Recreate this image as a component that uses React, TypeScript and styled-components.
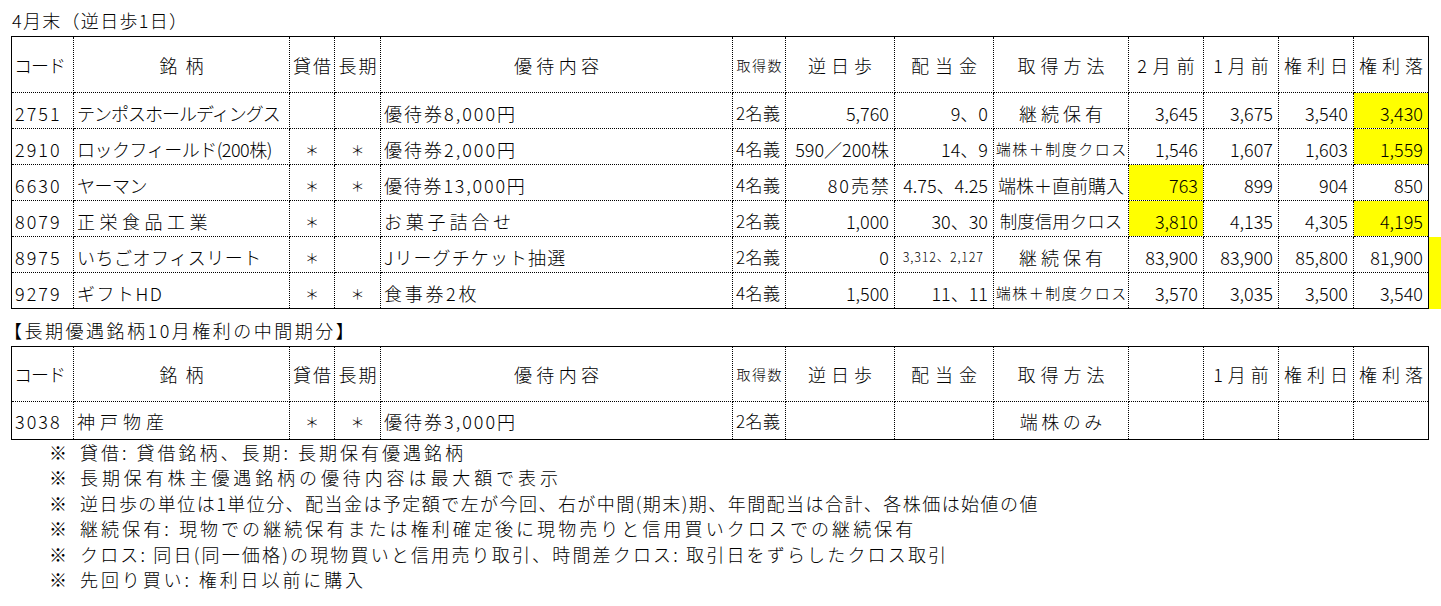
import React from 'react';
import styled, { createGlobalStyle } from 'styled-components';

const Global = createGlobalStyle`
  html, body { margin: 0; padding: 0; background: #fff; overflow: hidden; }
  body { font-family: "Noto Sans CJK JP", "Noto Sans", sans-serif; font-weight: 300; color: #000; }
`;

const Page = styled.div`
  width: 1441px;
  height: 606px;
  padding-left: 11px;
  box-sizing: border-box;
`;

const Title = styled.div<{ $h: number; $top: number; $indent: number; $ls: number }>`
  height: ${(p) => p.$h}px;
  box-sizing: border-box;
  padding-top: ${(p) => p.$top}px;
  margin-left: ${(p) => p.$indent}px;
  font-size: 18px;
  line-height: 26px;
  letter-spacing: ${(p) => p.$ls}px;
  white-space: nowrap;
`;

const SheetRow = styled.div`
  display: flex;
  align-items: flex-end;
`;

const Strip = styled.div`
  width: 12px;
  height: 72px;
  background: #ffff00;
  flex: none;
`;

const Sheet = styled.table`
  border-collapse: collapse;
  table-layout: fixed;
  width: 1418px;
  border: 1px solid #000;
  flex: none;
`;

const Col = styled.col<{ $w: number }>`
  width: ${(p) => p.$w}px;
`;

const Tr = styled.tr<{ $h: number }>`
  height: ${(p) => p.$h}px;
`;

type Align = 'left' | 'center' | 'right';

const Head = styled.th<{ $ls?: number; $size?: number; $align?: Align }>`
  border: 1px dotted #000;
  font-weight: 300;
  font-size: ${(p) => p.$size ?? 18}px;
  letter-spacing: ${(p) => p.$ls ?? 0}px;
  text-align: ${(p) => p.$align ?? 'center'};
  padding: 0 0 0 ${(p) => (p.$align === 'left' ? 2 : p.$ls ?? 0)}px;
  white-space: nowrap;
  overflow: hidden;
  vertical-align: middle;
  line-height: 26px;
`;

const Cell = styled.td<{
  $ls?: number;
  $size?: number;
  $align?: Align;
  $hl?: boolean;
  $mid?: boolean;
  $pr?: number;
}>`
  border: 1px dotted #000;
  font-size: ${(p) => p.$size ?? 18}px;
  letter-spacing: ${(p) => p.$ls ?? 0}px;
  text-align: ${(p) => p.$align ?? 'left'};
  padding: ${(p) => {
    const ls = p.$ls ?? 0;
    const b = p.$mid ? 0 : 2;
    if (p.$align === 'right') return `0 ${(p.$pr ?? 5) - ls}px ${b}px 0`;
    if (p.$align === 'center') return `0 0 ${b}px ${ls}px`;
    return `0 0 ${b}px 3px`;
  }};
  background: ${(p) => (p.$hl ? '#ffff00' : 'transparent')};
  white-space: nowrap;
  overflow: hidden;
  vertical-align: ${(p) => (p.$mid ? 'middle' : 'bottom')};
  line-height: 26px;
`;

const Notes = styled.div`
  display: flex;
  flex-direction: column;
  padding-left: 38px;
`;

const Note = styled.div<{ $ls: number }>`
  display: flex;
  font-size: 18px;
  line-height: 25.4px;
  white-space: nowrap;
  letter-spacing: ${(p) => p.$ls}px;
`;

const Mark = styled.span`
  width: 31px;
  letter-spacing: 0;
  flex: none;
`;

const widths = [62, 216, 45, 46, 352, 53, 109, 99, 135, 75, 75, 75, 75];

type Method = { text: string; size: number; ls: number };
const KEIZOKU: Method = { text: '継続保有', size: 18, ls: 4 };
const HAKABU_SEIDO: Method = { text: '端株＋制度クロス', size: 15, ls: 1.5 };
const HAKABU_CHOKU: Method = { text: '端株＋直前購入', size: 18, ls: 0 };
const SEIDO_SHINYO: Method = { text: '制度信用クロス', size: 17.5, ls: 0 };

type Row = {
  code: string;
  name: string;
  nameLs: number;
  kashaku: boolean;
  choki: boolean;
  yutai: string;
  yutaiLs: number;
  num: string;
  gyaku: string;
  gyakuLs: number;
  haito: string;
  haitoSmall?: boolean;
  method: Method;
  prices: string[];
  hl: boolean[];
};

const rows: Row[] = [
  {
    code: '2751', name: 'テンポスホールディングス', nameLs: -1, kashaku: false, choki: false,
    yutai: '優待券8,000円', yutaiLs: 2, num: '2名義', gyaku: '5,760', gyakuLs: 0,
    haito: '9、0', method: KEIZOKU,
    prices: ['3,645', '3,675', '3,540', '3,430'], hl: [false, false, false, true],
  },
  {
    code: '2910', name: 'ロックフィールド(200株)', nameLs: -0.5, kashaku: true, choki: true,
    yutai: '優待券2,000円', yutaiLs: 2, num: '4名義', gyaku: '590／200株', gyakuLs: 0,
    haito: '14、9', method: HAKABU_SEIDO,
    prices: ['1,546', '1,607', '1,603', '1,559'], hl: [false, false, false, true],
  },
  {
    code: '6630', name: 'ヤーマン', nameLs: -0.5, kashaku: true, choki: true,
    yutai: '優待券13,000円', yutaiLs: 1.8, num: '4名義', gyaku: '80売禁', gyakuLs: 2,
    haito: '4.75、4.25', method: HAKABU_CHOKU,
    prices: ['763', '899', '904', '850'], hl: [true, false, false, false],
  },
  {
    code: '8079', name: '正栄食品工業', nameLs: 4.5, kashaku: true, choki: false,
    yutai: 'お菓子詰合せ', yutaiLs: 3.8, num: '2名義', gyaku: '1,000', gyakuLs: 0,
    haito: '30、30', method: SEIDO_SHINYO,
    prices: ['3,810', '4,135', '4,305', '4,195'], hl: [true, false, false, true],
  },
  {
    code: '8975', name: 'いちごオフィスリート', nameLs: 0.5, kashaku: true, choki: false,
    yutai: 'Jリーグチケット抽選', yutaiLs: 1.1, num: '2名義', gyaku: '0', gyakuLs: 0,
    haito: '3,312、2,127', haitoSmall: true, method: KEIZOKU,
    prices: ['83,900', '83,900', '85,800', '81,900'], hl: [false, false, false, false],
  },
  {
    code: '9279', name: 'ギフトHD', nameLs: 1.5, kashaku: true, choki: true,
    yutai: '食事券2枚', yutaiLs: 2.7, num: '4名義', gyaku: '1,500', gyakuLs: 0,
    haito: '11、11', method: HAKABU_SEIDO,
    prices: ['3,570', '3,035', '3,500', '3,540'], hl: [false, false, false, false],
  },
];

const Star = () => <>＊</>;

function HeaderRow({ h, showTwoMonths }: { h: number; showTwoMonths: boolean }) {
  return (
    <Tr $h={h}>
      <Head $align="left" $ls={-1}>コード</Head>
      <Head $ls={8}>銘柄</Head>
      <Head $ls={2}>貸借</Head>
      <Head $ls={2}>長期</Head>
      <Head $ls={4.3}>優待内容</Head>
      <Head $size={14} $ls={1.5}>取得数</Head>
      <Head $ls={5}>逆日歩</Head>
      <Head $ls={6}>配当金</Head>
      <Head $ls={5}>取得方法</Head>
      <Head $ls={6}>{showTwoMonths ? '2月前' : ''}</Head>
      <Head $ls={5}>1月前</Head>
      <Head $ls={5}>権利日</Head>
      <Head $ls={5}>権利落</Head>
    </Tr>
  );
}

function Cols() {
  return (
    <colgroup>
      {widths.map((w, i) => (
        <Col key={i} $w={w} />
      ))}
    </colgroup>
  );
}

const notes: { text: string; ls: number }[] = [
  { text: '貸借: 貸借銘柄、長期: 長期保有優遇銘柄', ls: 3 },
  { text: '長期保有株主優遇銘柄の優待内容は最大額で表示', ls: 3.9 },
  { text: '逆日歩の単位は1単位分、配当金は予定額で左が今回、右が中間(期末)期、年間配当は合計、各株価は始値の値', ls: 1.45 },
  { text: '継続保有: 現物での継続保有または権利確定後に現物売りと信用買いクロスでの継続保有', ls: 3.07 },
  { text: 'クロス: 同日(同一価格)の現物買いと信用売り取引、時間差クロス: 取引日をずらしたクロス取引', ls: 2.17 },
  { text: '先回り買い: 権利日以前に購入', ls: 2.9 },
];

export default function App() {
  return (
    <>
      <Global />
      <Page>
        <Title $h={36} $top={7} $indent={1} $ls={1.3}>
          4月末（逆日歩1日）
        </Title>
        <SheetRow>
          <Sheet>
            <Cols />
            <tbody>
              <HeaderRow h={56} showTwoMonths />
              {rows.map((r) => (
                <Tr $h={36} key={r.code}>
                  <Cell $ls={2}>{r.code}</Cell>
                  <Cell $ls={r.nameLs}>{r.name}</Cell>
                  <Cell $align="center" $size={14}>{r.kashaku ? <Star /> : ''}</Cell>
                  <Cell $align="center" $size={14}>{r.choki ? <Star /> : ''}</Cell>
                  <Cell $ls={r.yutaiLs}>{r.yutai}</Cell>
                  <Cell $size={17} $ls={0.5}>{r.num}</Cell>
                  <Cell $align="right" $ls={r.gyakuLs}>{r.gyaku}</Cell>
                  {r.haitoSmall ? (
                    <Cell $align="right" $size={12.5} $ls={0.8} $pr={10}>{r.haito}</Cell>
                  ) : (
                    <Cell $align="right">{r.haito}</Cell>
                  )}
                  <Cell $align="center" $size={r.method.size} $ls={r.method.ls}>
                    {r.method.text}
                  </Cell>
                  {r.prices.map((p, i) => (
                    <Cell key={i} $align="right" $hl={r.hl[i]}>
                      {p}
                    </Cell>
                  ))}
                </Tr>
              ))}
            </tbody>
          </Sheet>
          <Strip />
        </SheetRow>
        <Title $h={37} $top={8} $indent={-7} $ls={2.5}>
          【長期優遇銘柄10月権利の中間期分】
        </Title>
        <Sheet>
          <Cols />
          <tbody>
            <HeaderRow h={55} showTwoMonths={false} />
            <Tr $h={38}>
              <Cell $mid $ls={2}>3038</Cell>
              <Cell $mid $ls={5}>神戸物産</Cell>
              <Cell $mid $align="center" $size={14}><Star /></Cell>
              <Cell $mid $align="center" $size={14}><Star /></Cell>
              <Cell $mid $ls={2}>優待券3,000円</Cell>
              <Cell $mid $size={17} $ls={0.5}>2名義</Cell>
              <Cell $mid />
              <Cell $mid />
              <Cell $mid $align="center" $ls={3.5}>端株のみ</Cell>
              <Cell $mid />
              <Cell $mid />
              <Cell $mid />
              <Cell $mid />
            </Tr>
          </tbody>
        </Sheet>
        <Notes>
          {notes.map((n, i) => (
            <Note key={i} $ls={n.ls}>
              <Mark>※</Mark>
              <span>{n.text}</span>
            </Note>
          ))}
        </Notes>
      </Page>
    </>
  );
}
